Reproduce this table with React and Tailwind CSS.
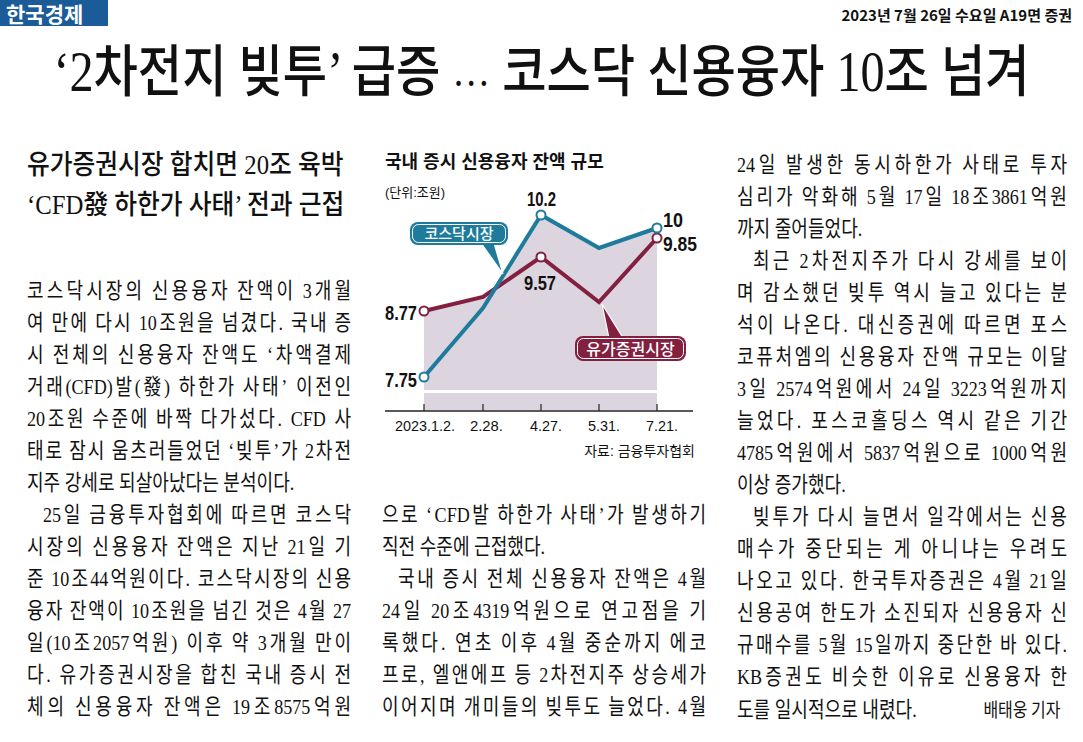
const left = [
  { t: "코스닥시장의 신용융자 잔액이 3개월" },
  { t: "여 만에 다시 10조원을 넘겼다. 국내 증" },
  { t: "시 전체의 신용융자 잔액도 ‘차액결제" },
  { t: "거래(CFD)발(發) 하한가 사태’ 이전인" },
  { t: "20조원 수준에 바짝 다가섰다. CFD 사" },
  { t: "태로 잠시 움츠러들었던 ‘빚투’가 2차전" },
  { t: "지주 강세로 되살아났다는 분석이다.", last: true },
  { t: "25일 금융투자협회에 따르면 코스닥", indent: true },
  { t: "시장의 신용융자 잔액은 지난 21일 기" },
  { t: "준 10조44억원이다. 코스닥시장의 신용" },
  { t: "융자 잔액이 10조원을 넘긴 것은 4월 27" },
  { t: "일(10조2057억원) 이후 약 3개월 만이" },
  { t: "다. 유가증권시장을 합친 국내 증시 전" },
  { t: "체의 신용융자 잔액은 19조8575억원" },
];

const middle = [
  { t: "으로 ‘CFD발 하한가 사태’가 발생하기" },
  { t: "직전 수준에 근접했다.", last: true },
  { t: "국내 증시 전체 신용융자 잔액은 4월", indent: true },
  { t: "24일 20조4319억원으로 연고점을 기" },
  { t: "록했다. 연초 이후 4월 중순까지 에코" },
  { t: "프로, 엘앤에프 등 2차전지주 상승세가" },
  { t: "이어지며 개미들의 빚투도 늘었다. 4월" },
];

const right = [
  { t: "24일 발생한 동시하한가 사태로 투자" },
  { t: "심리가 악화해 5월 17일 18조3861억원" },
  { t: "까지 줄어들었다.", last: true },
  { t: "최근 2차전지주가 다시 강세를 보이", indent: true },
  { t: "며 감소했던 빚투 역시 늘고 있다는 분" },
  { t: "석이 나온다. 대신증권에 따르면 포스" },
  { t: "코퓨처엠의 신용융자 잔액 규모는 이달" },
  { t: "3일 2574억원에서 24일 3223억원까지" },
  { t: "늘었다. 포스코홀딩스 역시 같은 기간" },
  { t: "4785억원에서 5837억원으로 1000억원" },
  { t: "이상 증가했다.", last: true },
  { t: "빚투가 다시 늘면서 일각에서는 신용", indent: true },
  { t: "매수가 중단되는 게 아니냐는 우려도" },
  { t: "나오고 있다. 한국투자증권은 4월 21일" },
  { t: "신용공여 한도가 소진되자 신용융자 신" },
  { t: "규매수를 5월 15일까지 중단한 바 있다." },
  { t: "KB증권도 비슷한 이유로 신용융자 한" },
];

// newspaper-style justification: spread the slack between characters,
// keeping runs of digits / latin letters together
function Line({ row }) {
  if (row.last) {
    return <div className={row.indent ? "pl-[19px]" : ""}>{row.t}</div>;
  }
  const parts = row.t.match(/[0-9A-Za-z()]+|\s|./gu);
  return (
    <div className={"flex justify-between" + (row.indent ? " pl-[19px]" : "")}>
      {parts.map((p, i) =>
        p === " " ? <span key={i} className="w-[4px]" /> : <span key={i}>{p}</span>
      )}
    </div>
  );
}

function Lines({ rows }) {
  return rows.map((r, i) => <Line key={i} row={r} />);
}

const TEAL = "#1f7b9b";
const WINE = "#84203f";

function Chart() {
  return (
    <svg
      width="324"
      height="381"
      viewBox="0 0 324 381"
      className="block font-['Liberation_Sans','Noto_Sans_CJK_KR',sans-serif]"
    >
      <text x="3" y="44" fontSize="18" fontWeight="700" dominantBaseline="central" fill="#111">
        국내 증시 신용융자 잔액 규모
      </text>
      <text x="3" y="74" fontSize="13" dominantBaseline="central" fill="#111">
        (단위:조원)
      </text>

      {/* shaded area under the upper line */}
      <polygon
        points="42,193 101,179 113,171 159,97 217,130 275,110 275,292 42,292"
        fill="#dcd5e0"
      />
      <rect x="42" y="272" width="233" height="3" fill="#fff" />

      {/* axis */}
      <line x1="3" y1="293" x2="311" y2="293" stroke="#222" strokeWidth="1.5" />
      {[42, 101, 159, 217, 275].map(x => (
        <line key={x} x1={x} y1="286" x2={x} y2="293" stroke="#222" strokeWidth="1.2" />
      ))}

      {/* callout: 유가증권시장 */}
      <polygon points="227,220 241,220 220,186" fill={WINE} stroke="#fff" strokeWidth="1.2" />
      <rect x="193" y="218" width="111" height="25" rx="8" fill={WINE} />
      <rect x="195.5" y="220.5" width="106" height="20" rx="6" fill="none" stroke="#fff" strokeWidth="1" />
      <text x="248.5" y="231" fontSize="16" fontWeight="500" fill="#fff" textAnchor="middle" dominantBaseline="central">
        유가증권시장
      </text>

      {/* lines */}
      <polyline
        points="42,193 101,179 159,139 217,184 275,120"
        fill="none"
        stroke={WINE}
        strokeWidth="4"
      />
      <polyline
        points="42,259 101,190 159,97 217,130 275,110"
        fill="none"
        stroke={TEAL}
        strokeWidth="4"
      />

      {/* callout: 코스닥시장 */}
      <polygon points="99,125 112,125 121,156" fill={TEAL} stroke="#fff" strokeWidth="1.2" />
      <rect x="28" y="104" width="98" height="23" rx="8" fill={TEAL} />
      <rect x="30.5" y="106.5" width="93" height="18" rx="6" fill="none" stroke="#fff" strokeWidth="1" />
      <text x="77" y="115.5" fontSize="15" fontWeight="500" fill="#fff" textAnchor="middle" dominantBaseline="central">
        코스닥시장
      </text>

      {/* markers */}
      {[
        [42, 193, WINE],
        [159, 139, WINE],
        [275, 120, WINE],
        [42, 259, TEAL],
        [159, 97, TEAL],
        [275, 110, TEAL],
      ].map(([x, y, c], i) => (
        <circle key={i} cx={x} cy={y} r="4.5" fill="#fff" stroke={c} strokeWidth="2" />
      ))}

      {/* values */}
      <g fontSize="20" fontWeight="700" fill="#111" dominantBaseline="central">
        <text x="3" y="195" textLength="32" lengthAdjust="spacingAndGlyphs">8.77</text>
        <text x="3" y="262" textLength="32" lengthAdjust="spacingAndGlyphs">7.75</text>
        <text x="142" y="165" textLength="32" lengthAdjust="spacingAndGlyphs">9.57</text>
        <text x="145" y="81" textLength="29" lengthAdjust="spacingAndGlyphs">10.2</text>
        <text x="281" y="102" textLength="20" lengthAdjust="spacingAndGlyphs">10</text>
        <text x="281" y="126" textLength="34" lengthAdjust="spacingAndGlyphs">9.85</text>
      </g>

      {/* x labels */}
      <g fontSize="15" fill="#111" dominantBaseline="central">
        <text x="13" y="307" textLength="60" lengthAdjust="spacingAndGlyphs">2023.1.2.</text>
        <text x="88" y="307" textLength="33" lengthAdjust="spacingAndGlyphs">2.28.</text>
        <text x="148" y="307" textLength="32" lengthAdjust="spacingAndGlyphs">4.27.</text>
        <text x="206" y="307" textLength="32" lengthAdjust="spacingAndGlyphs">5.31.</text>
        <text x="264" y="307" textLength="32" lengthAdjust="spacingAndGlyphs">7.21.</text>
      </g>
      <text x="313" y="333" fontSize="14" fill="#111" textAnchor="end" dominantBaseline="central">
        자료: 금융투자협회
      </text>
    </svg>
  );
}

export default function App() {
  return (
    <div className="w-[1083px] h-[742px] bg-white text-[#111] overflow-hidden font-['Liberation_Serif','Noto_Sans_CJK_KR',serif]">
      {/* masthead */}
      <div className="h-[26px] flex items-center justify-between">
        <div className="w-[108px] h-[26px] bg-[#1b5b98] flex items-center pl-[6px]">
          <span className="text-white font-bold text-[21px] leading-none font-['Noto_Sans_CJK_KR',sans-serif]">
            한국경제
          </span>
        </div>
        <div className="pr-[11px] pt-[2px] text-[15px] font-bold leading-none font-['Noto_Sans_CJK_KR',sans-serif]">
          2023년 7월 26일 수요일 A19면 증권
        </div>
      </div>

      {/* headline */}
      <div className="h-[92px] flex items-center justify-center">
        <h1 className="inline-block scale-x-[0.86] origin-center whitespace-nowrap text-[56px] leading-none font-medium">
          ‘2차전지 빚투’ 급증 <span className="relative -top-[5px] text-[44px]">…</span> 코스닥 신용융자 10조 넘겨
        </h1>
      </div>

      {/* columns */}
      <div className="grid grid-cols-[324px_324px_330px] gap-x-[31px] pl-[27px]">
        <div className="pt-[27px]">
          <div className="w-[360px] origin-top-left scale-x-[0.9] text-[27.5px] leading-[40px] font-medium whitespace-nowrap">
            <div>유가증권시장 합치면 20조 육박</div>
            <div>‘CFD發 하한가 사태’ 전과 근접</div>
          </div>
          <div className="mt-[50px] w-[386px] origin-top-left scale-x-[0.84] text-[21.5px] leading-[32px]">
            <Lines rows={left} />
          </div>
        </div>

        <div>
          <div className="h-[381px]">
            <Chart />
          </div>
          <div className="w-[386px] origin-top-left scale-x-[0.84] text-[21.5px] leading-[32px]">
            <Lines rows={middle} />
          </div>
        </div>

        <div className="pt-[31px]">
          <div className="w-[393px] origin-top-left scale-x-[0.84] text-[21.5px] leading-[32px]">
            <Lines rows={right} />
            <div className="flex justify-between items-baseline">
              <span>도를 일시적으로 내렸다.</span>
              <span className="text-[19px] pr-[8px] font-['Noto_Sans_CJK_KR',sans-serif]">배태웅 기자</span>
            </div>
          </div>
        </div>
      </div>
    </div>
  );
}
